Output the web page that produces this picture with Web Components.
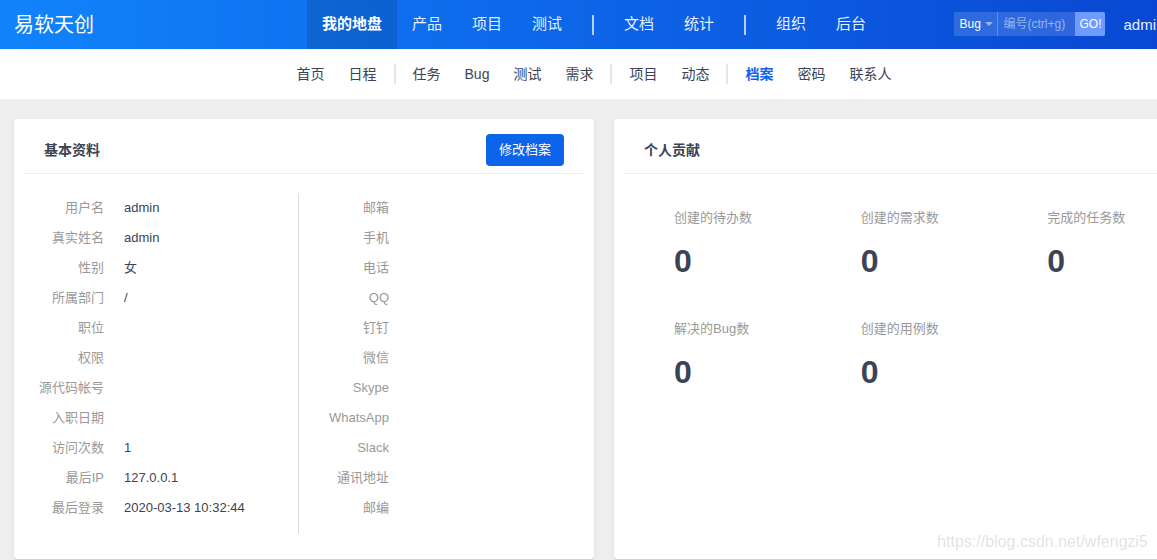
<!DOCTYPE html>
<html lang="zh-CN">
<head>
<meta charset="utf-8">
<title>我的地盘 - 档案</title>
<style>
html { overflow-x: hidden; }
body {
  margin: 0;
  min-width: 1208px;
  min-height: 100vh;
  background: #eee;
  color: #3c4353;
  font: 13px/20px "Liberation Sans", "Noto Sans CJK SC", sans-serif;
}
</style>
</head>
<body>
<profile-page></profile-page>
<script>
class BaseElement extends HTMLElement {
  render(css, html) {
    this.attachShadow({ mode: "open" }).innerHTML =
      `<style>*{box-sizing:border-box}${css}</style>${html}`;
  }
}

customElements.define("nav-item", class extends BaseElement {
  connectedCallback() {
    const current = this.hasAttribute("active") ? ' aria-current="page"' : "";
    this.render(`
      :host { display: block; }
      a { display: block; height: var(--nav-height); padding: 0 var(--nav-pad); color: inherit; text-decoration: none; white-space: nowrap; }
      :host([active]) a { background: var(--nav-active-bg); color: var(--nav-active-color); font-weight: bold; }
    `, `<a href="#"${current}><slot></slot></a>`);
  }
});

customElements.define("nav-divider", class extends BaseElement {
  connectedCallback() {
    this.render(`
      :host { display: block; width: 2px; height: 20px; margin: 0 var(--divider-gap); background: var(--divider-color); }
    `, "");
  }
});

customElements.define("quick-search", class extends BaseElement {
  connectedCallback() {
    this.render(`
      :host { display: block; }
      form { display: flex; height: 24px; margin: 0; border-radius: 2px; overflow: hidden; background: rgba(255,255,255,.15); }
      select, input, button { margin: 0; border: 0; outline: 0; border-radius: 0; background: none; color: #fff; font: inherit; font-size: 12px; line-height: 24px; height: 24px; appearance: none; }
      .kind { position: relative; width: 44px; border-right: 1px solid rgba(255,255,255,.25); }
      select { width: 100%; padding: 0 0 0 5px; }
      option { color: #3c4353; }
      svg { position: absolute; right: 4px; top: 10px; pointer-events: none; }
      input { width: 77px; padding: 0 5px; }
      input::placeholder { color: rgba(255,255,255,.5); opacity: 1; }
      button { width: 30px; padding: 0; background: #6f9bff; }
    `, `<form>
      <div class="kind">
        <select aria-label="类型"><option>Bug</option></select>
        <svg width="8" height="4" viewBox="0 0 8 4"><path d="M0 0h8L4 4z" fill="#fff" fill-opacity=".5"/></svg>
      </div>
      <input type="text" aria-label="编号" placeholder="编号(ctrl+g)">
      <button type="button">GO!</button>
    </form>`);
  }
});

customElements.define("app-header", class extends BaseElement {
  connectedCallback() {
    this.render(`
      :host {
        display: grid; grid-template-columns: 1fr auto 1fr; align-items: center;
        height: 49px; padding-right: 20px; color: #e6f0ff;
        background: linear-gradient(90deg, #1183fb, #0945d1);
      }
      .brand { padding-left: 14px; color: #fff; font-size: 20px; line-height: 48px; text-decoration: none; }
      nav {
        display: flex; align-items: center; font-size: 15px; line-height: 47px;
        --nav-height: 49px; --nav-pad: 15px; --nav-active-bg: rgba(0,0,0,.12); --nav-active-color: #fff;
        --divider-gap: 15px; --divider-color: rgba(255,255,255,.7);
      }
      .tools { display: flex; align-items: center; justify-content: flex-end; gap: 18px; padding-right: 32px; }
      quick-search { margin-bottom: 2px; }
      .user { color: inherit; font-size: 15px; text-decoration: none; }
    `, `<a class="brand" href="#">易软天创</a>
      <nav aria-label="主导航">
        <nav-item active>我的地盘</nav-item><nav-item>产品</nav-item><nav-item>项目</nav-item><nav-item>测试</nav-item>
        <nav-divider></nav-divider>
        <nav-item>文档</nav-item><nav-item>统计</nav-item>
        <nav-divider></nav-divider>
        <nav-item>组织</nav-item><nav-item>后台</nav-item>
      </nav>
      <div class="tools"><quick-search></quick-search><a class="user" href="#">admi</a></div>`);
  }
});

customElements.define("sub-nav", class extends BaseElement {
  connectedCallback() {
    this.render(`
      :host { display: block; height: 50px; padding-right: 20px; background: #fff; }
      nav {
        display: flex; align-items: center; justify-content: center; font-size: 14px; line-height: 50px;
        --nav-height: 50px; --nav-pad: 12px; --nav-active-bg: none; --nav-active-color: #0c64eb;
        --divider-gap: 5px; --divider-color: #e5e5e5;
      }
    `, `<nav aria-label="二级导航">
      <nav-item>首页</nav-item><nav-item>日程</nav-item>
      <nav-divider></nav-divider>
      <nav-item>任务</nav-item><nav-item>Bug</nav-item><nav-item>测试</nav-item><nav-item>需求</nav-item>
      <nav-divider></nav-divider>
      <nav-item>项目</nav-item><nav-item>动态</nav-item>
      <nav-divider></nav-divider>
      <nav-item active>档案</nav-item><nav-item>密码</nav-item><nav-item>联系人</nav-item>
    </nav>`);
  }
});

customElements.define("info-panel", class extends BaseElement {
  connectedCallback() {
    this.render(`
      :host { display: block; padding: 0 10px; background: #fff; border-radius: 4px; box-shadow: 0 1px 1px rgba(0,0,0,.1), 0 2px 6px rgba(0,0,0,.04); }
      header { display: flex; align-items: center; justify-content: space-between; height: 55px; padding: 8px 20px 0; border-bottom: 1px solid #eee; }
      h2 { margin: 0; font-size: 14px; line-height: 20px; }
    `, `<header><h2>${this.getAttribute("heading")}</h2><slot name="action"></slot></header><slot></slot>`);
  }
});

customElements.define("primary-button", class extends BaseElement {
  connectedCallback() {
    this.render(`
      :host { display: block; }
      button { display: block; height: 32px; padding: 0 13px; border: 0; border-radius: 4px; background: #0c64eb; color: #fff; font: inherit; }
    `, `<button type="button"><slot></slot></button>`);
  }
});

customElements.define("field-table", class extends BaseElement {
  connectedCallback() {
    const rows = this.getAttribute("rows").split("|").map(row => {
      const [label, value = ""] = row.split("=");
      return `<tr><th scope="row">${label}</th><td>${value}</td></tr>`;
    }).join("");
    this.render(`
      :host { display: block; }
      table { width: 100%; table-layout: fixed; border-collapse: collapse; }
      th, td { height: 30px; padding: 0; text-align: left; white-space: nowrap; }
      th { width: 100px; padding-right: 20px; color: #999; font-weight: normal; text-align: right; }
    `, `<table>${rows}</table>`);
  }
});

customElements.define("stat-tile", class extends BaseElement {
  connectedCallback() {
    this.render(`
      :host { display: block; padding-left: 50px; }
      .label { color: #999; }
      .value { margin-top: 13px; font-size: 32px; line-height: 40px; font-weight: bold; }
    `, `<div class="label">${this.getAttribute("label")}</div><div class="value"><slot></slot></div>`);
  }
});

customElements.define("profile-page", class extends BaseElement {
  connectedCallback() {
    this.render(`
      :host { display: block; }
      main { display: grid; grid-template-columns: 1fr 1fr; gap: 20px; padding: 20px 14px 0; }
      .fields { display: grid; grid-template-columns: 1fr 1fr; gap: 10px; padding: 19px 0 25px; }
      field-table { padding-bottom: 11px; }
      field-table:first-child { border-right: 1px solid #ddd; }
      .stats { display: grid; grid-template-columns: repeat(3, 1fr); row-gap: 38px; padding: 34px 0; }
      .watermark { position: fixed; right: 9px; bottom: 8px; color: #e3e3e3; font-size: 16px; }
    `, `<app-header></app-header>
      <sub-nav></sub-nav>
      <main>
        <info-panel heading="基本资料">
          <primary-button slot="action">修改档案</primary-button>
          <div class="fields">
            <field-table rows="用户名=admin|真实姓名=admin|性别=女|所属部门=/|职位|权限|源代码帐号|入职日期|访问次数=1|最后IP=127.0.0.1|最后登录=2020-03-13 10:32:44"></field-table>
            <field-table rows="邮箱|手机|电话|QQ|钉钉|微信|Skype|WhatsApp|Slack|通讯地址|邮编"></field-table>
          </div>
        </info-panel>
        <info-panel heading="个人贡献">
          <div class="stats">
            <stat-tile label="创建的待办数">0</stat-tile>
            <stat-tile label="创建的需求数">0</stat-tile>
            <stat-tile label="完成的任务数">0</stat-tile>
            <stat-tile label="解决的Bug数">0</stat-tile>
            <stat-tile label="创建的用例数">0</stat-tile>
          </div>
        </info-panel>
      </main>
      <div class="watermark">https://blog.csdn.net/wfengzi5</div>`);
  }
});
</script>
</body>
</html>
